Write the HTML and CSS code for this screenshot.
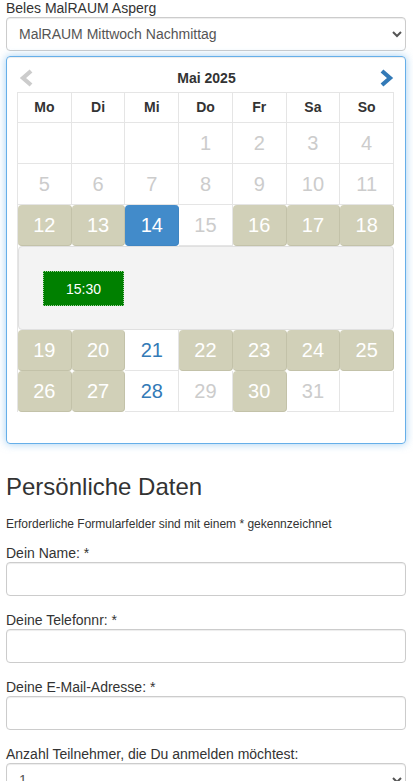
FILE: index.html
```html
<!DOCTYPE html>
<html lang="de">
<head>
    <meta charset="UTF-8">
    <meta name="viewport" content="width=device-width, initial-scale=1.0">
    <title>MalRAUM Anmeldung</title>
    <link rel="stylesheet" href="styles.css">
</head>
<body>
    <div class="page">
        <label class="top-label" for="kurs">Beles MalRAUM Asperg</label>
        <select id="kurs" class="form-control">
            <option>MalRAUM Mittwoch Nachmittag</option>
        </select>

        <div class="calendar">
            <div class="cal-head">
                <span class="cal-nav prev">
                    <svg width="14" height="18" viewBox="0 0 14 18"><polyline points="12,2 4,9 12,16" fill="none" stroke="#cccccc" stroke-width="4.2"/></svg>
                </span>
                <span class="cal-title">Mai 2025</span>
                <span class="cal-nav next">
                    <svg width="14" height="18" viewBox="0 0 14 18"><polyline points="2,2 10,9 2,16" fill="none" stroke="#337ab7" stroke-width="4.2"/></svg>
                </span>
            </div>

            <div class="cal-grid">
                <div class="dow">Mo</div>
                <div class="dow">Di</div>
                <div class="dow">Mi</div>
                <div class="dow">Do</div>
                <div class="dow">Fr</div>
                <div class="dow">Sa</div>
                <div class="dow">So</div>

                <div class="day"></div>
                <div class="day"></div>
                <div class="day"></div>
                <div class="day past">1</div>
                <div class="day past">2</div>
                <div class="day past">3</div>
                <div class="day past">4</div>

                <div class="day past">5</div>
                <div class="day past">6</div>
                <div class="day past">7</div>
                <div class="day past">8</div>
                <div class="day past">9</div>
                <div class="day past">10</div>
                <div class="day past">11</div>

                <div class="day free">12</div>
                <div class="day free">13</div>
                <div class="day selected">14</div>
                <div class="day past">15</div>
                <div class="day free">16</div>
                <div class="day free">17</div>
                <div class="day free">18</div>

                <div class="slots">
                    <button class="slot">15:30</button>
                </div>

                <div class="day free">19</div>
                <div class="day free">20</div>
                <div class="day open">21</div>
                <div class="day free">22</div>
                <div class="day free">23</div>
                <div class="day free">24</div>
                <div class="day free">25</div>

                <div class="day free">26</div>
                <div class="day free">27</div>
                <div class="day open">28</div>
                <div class="day past">29</div>
                <div class="day free">30</div>
                <div class="day past">31</div>
                <div class="day"></div>
            </div>
        </div>

        <h3>Persönliche Daten</h3>
        <p class="hint">Erforderliche Formularfelder sind mit einem * gekennzeichnet</p>

        <div class="form-group">
            <label for="name">Dein Name: *</label>
            <input type="text" id="name" class="form-control">
        </div>
        <div class="form-group">
            <label for="telefon">Deine Telefonnr: *</label>
            <input type="text" id="telefon" class="form-control">
        </div>
        <div class="form-group">
            <label for="email">Deine E-Mail-Adresse: *</label>
            <input type="text" id="email" class="form-control">
        </div>
        <div class="form-group">
            <label for="anzahl">Anzahl Teilnehmer, die Du anmelden möchtest:</label>
            <select id="anzahl" class="form-control">
                <option>1</option>
                <option>2</option>
                <option>3</option>
            </select>
        </div>
    </div>
</body>
</html>
```

FILE: styles.css
```css
body {
    margin: 0;
    font-family: "Liberation Sans", Arial, sans-serif;
    font-size: 14px;
    color: #333;
    background-color: #fff;
}
.page {
    width: 400px;
    padding-left: 6px;
}
.top-label {
    display: block;
    line-height: 17px;
}
.form-control {
    display: block;
    box-sizing: border-box;
    width: 100%;
    height: 34px;
    padding: 6px 12px;
    font-family: inherit;
    font-size: 14px;
    color: #555;
    background-color: #fff;
    border: 1px solid #ccc;
    border-radius: 4px;
    box-shadow: inset 0 1px 1px rgba(0, 0, 0, 0.075);
    margin: 0;
}
select.form-control {
    padding-left: 8px;
}

/* Kalender */
.calendar {
    box-sizing: border-box;
    height: 388px;
    margin-top: 5px;
    padding: 10px 10px 31px;
    border: 1px solid #66afe9;
    border-radius: 4px;
    box-shadow: inset 0 1px 1px rgba(0, 0, 0, 0.075), 0 0 8px rgba(102, 175, 233, 0.6);
}
.cal-head {
    display: flex;
    align-items: center;
    justify-content: space-between;
    height: 22px;
    margin-bottom: 3px;
    padding: 0 1px 0 2px;
}
.cal-nav svg {
    display: block;
}
.cal-title {
    font-weight: bold;
}
.cal-grid {
    display: grid;
    grid-template-columns: repeat(7, 1fr);
    width: 377px;
    box-sizing: border-box;
    border-top: 1px solid #e5e5e5;
    border-left: 1px solid #e5e5e5;
}
.dow,
.day {
    border-right: 1px solid #e5e5e5;
    border-bottom: 1px solid #e5e5e5;
    text-align: center;
}
.dow {
    height: 29px;
    line-height: 29px;
    font-weight: bold;
}
.day {
    height: 40px;
    line-height: 40px;
    font-size: 20px;
}
.day.past {
    color: #ccc;
}
.day.free {
    background-color: #d1d0b8;
    border-color: #c3c2a9;
    border-radius: 4px;
    color: #fff;
}
.day.selected {
    background-color: #428bca;
    border-color: #3f85c2;
    border-radius: 4px;
    color: #fff;
}
.day.open {
    color: #337ab7;
}
.slots {
    grid-column: 1 / -1;
    box-sizing: border-box;
    height: 84px;
    padding: 24px;
    background-color: #f3f3f3;
    border: 1px solid #e0e0e0;
    border-radius: 4px;
}
.slot {
    display: block;
    width: 81px;
    height: 35px;
    padding: 0;
    font-family: inherit;
    font-size: 14px;
    color: #fff;
    background-color: #008000;
    border: 1px dotted #9fd09f;
    cursor: pointer;
}

/* Formular */
h3 {
    margin: 30px 0 16px;
    font-size: 24px;
    font-weight: normal;
    line-height: 1.1;
    color: #333;
}
.hint {
    margin: 0 0 11px;
    font-size: 12px;
    line-height: 17px;
}
.form-group {
    margin-bottom: 15px;
}
.form-group label {
    display: block;
    line-height: 18px;
}
```
